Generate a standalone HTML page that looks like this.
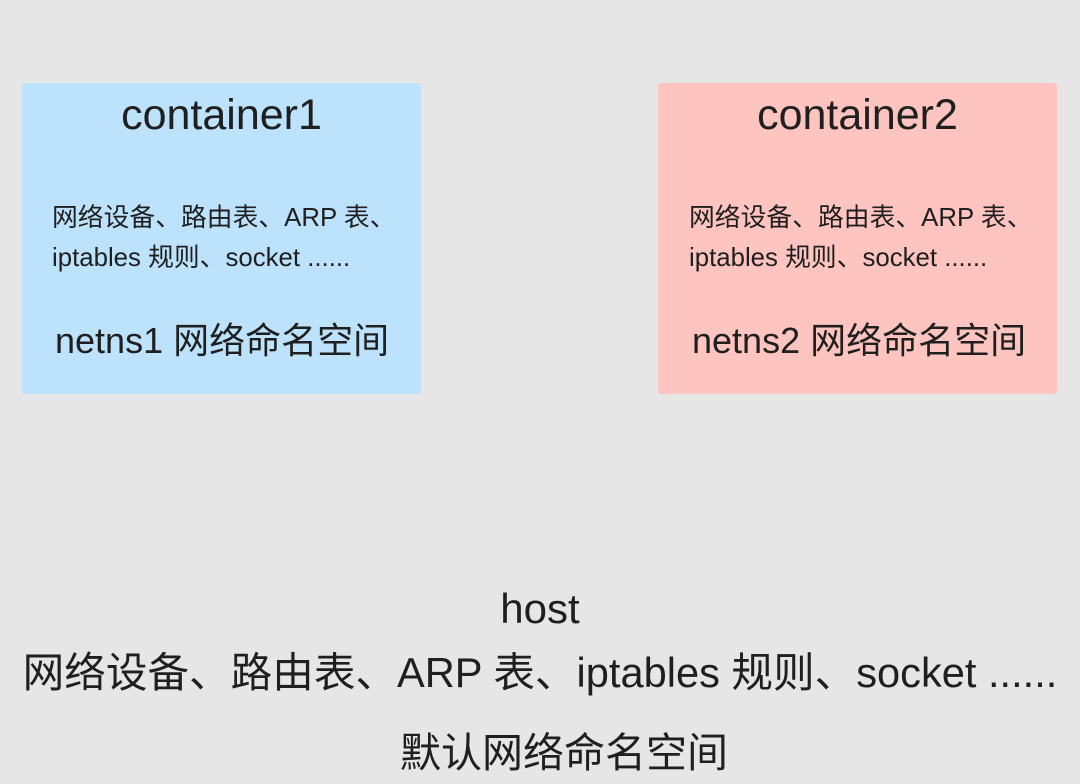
<!DOCTYPE html>
<html><head><meta charset="utf-8"><style>
html,body{margin:0;padding:0}
body{width:1080px;height:784px;background:#e6e6e6;position:relative;overflow:hidden;font-family:"Liberation Sans","Noto Sans CJK SC",sans-serif;color:#1f1f1f}
.box{position:absolute;top:83px;width:399px;height:311px;border-radius:3px}
.t{position:absolute;white-space:nowrap;line-height:1}
.c{left:0;right:0;text-align:center}
</style></head><body>
<div class="box" style="left:22px;background:#bde2fc"></div>
<div class="box" style="left:658px;background:#fec4bf"></div>

<div class="t c" style="left:22px;width:399px;top:94px;font-size:43px">container1</div>
<div class="t" style="left:52px;top:206px;font-size:25.8px">网络设备、路由表、ARP 表、</div>
<div class="t" style="left:52px;top:246px;font-size:25.8px">iptables 规则、socket ......</div>
<div class="t" style="left:55px;top:323px;font-size:36px">netns1 网络命名空间</div>

<div class="t c" style="left:658px;width:399px;top:94px;font-size:43px">container2</div>
<div class="t" style="left:689px;top:206px;font-size:25.8px">网络设备、路由表、ARP 表、</div>
<div class="t" style="left:689px;top:246px;font-size:25.8px">iptables 规则、socket ......</div>
<div class="t" style="left:692px;top:323px;font-size:36px">netns2 网络命名空间</div>

<div class="t c" style="top:588px;font-size:42px">host</div>
<div class="t c" style="top:652px;font-size:41.6px">网络设备、路由表、ARP 表、iptables 规则、socket ......</div>
<div class="t" style="left:400px;top:733px;font-size:41px">默认网络命名空间</div>
</body></html>
